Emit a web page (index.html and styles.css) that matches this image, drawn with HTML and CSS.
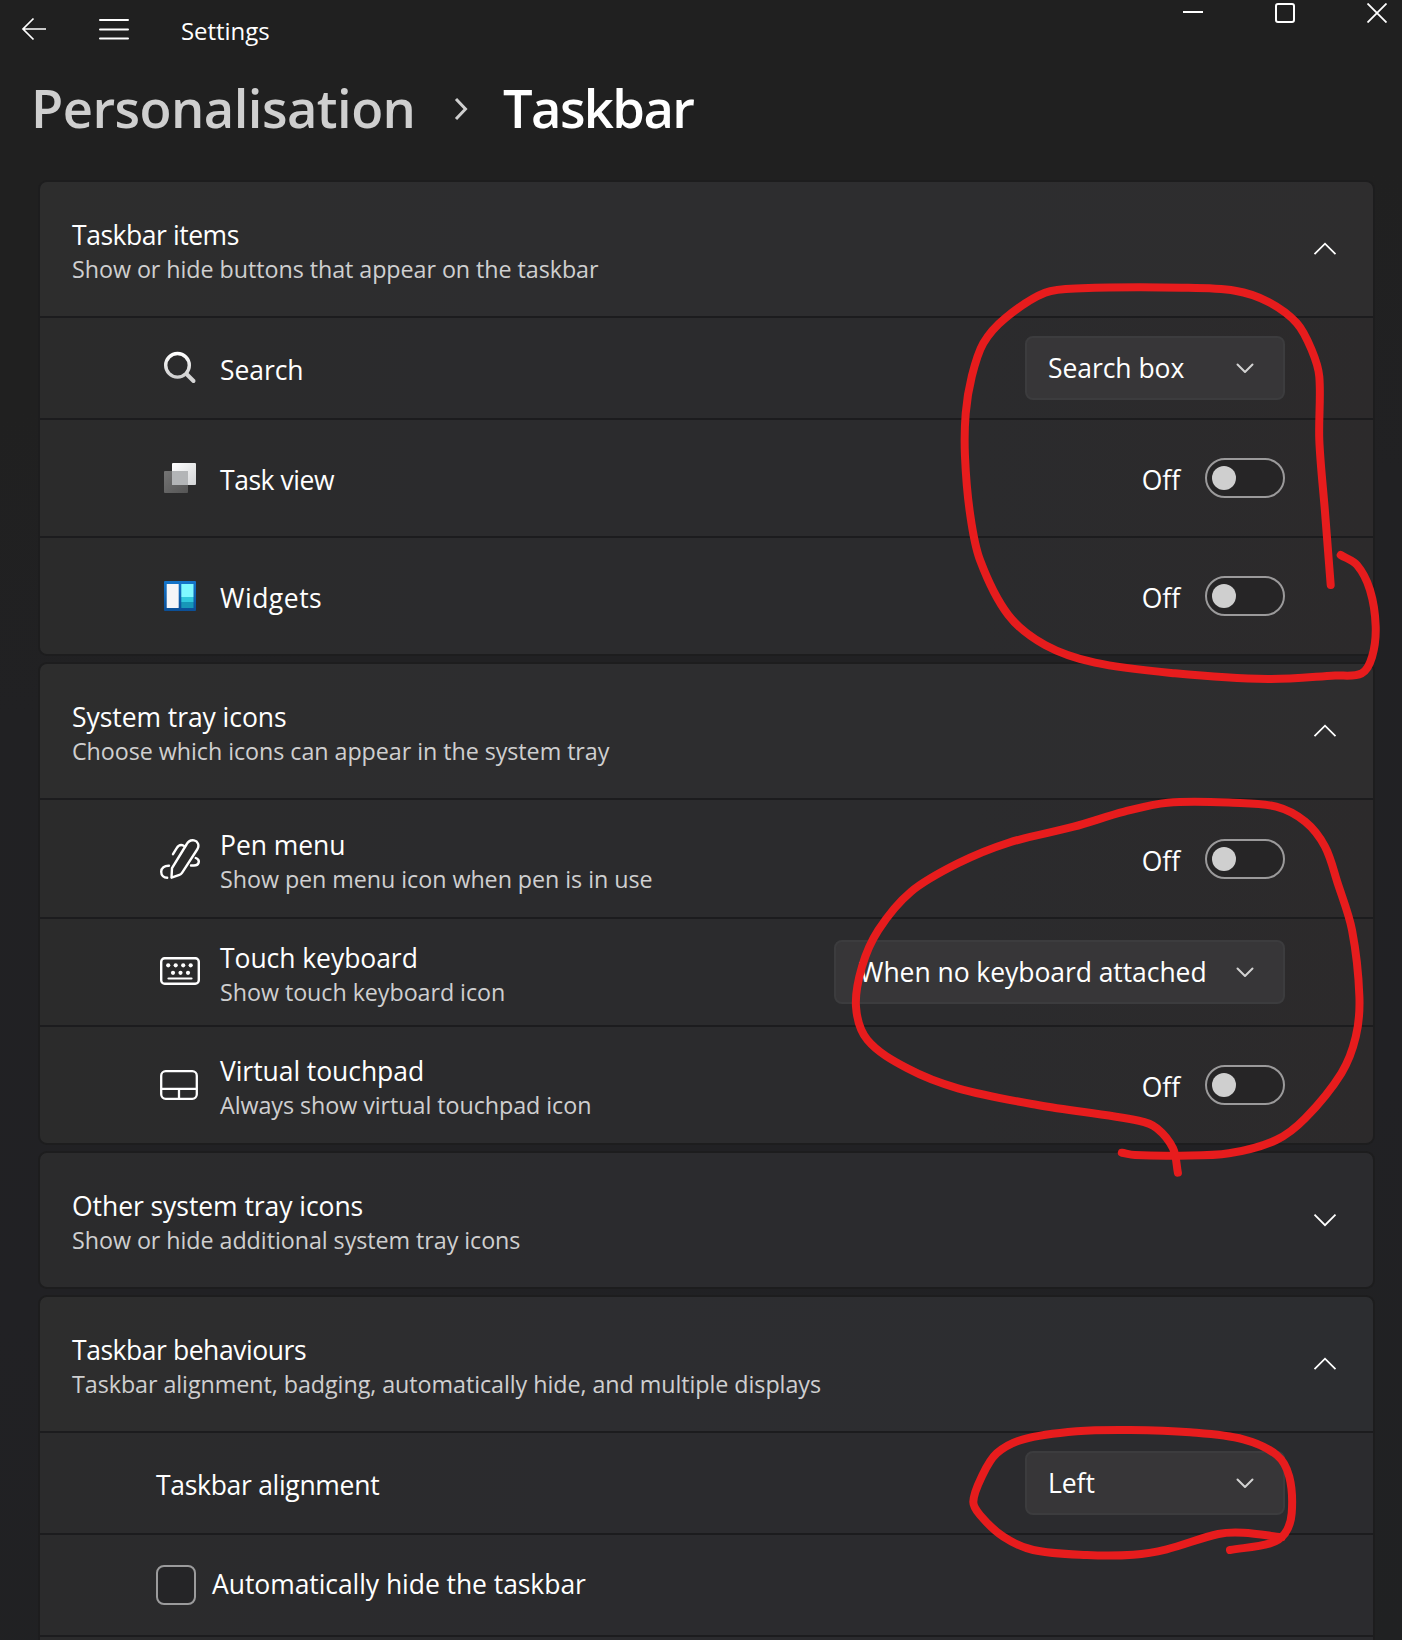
FILE: index.html
```html
<!DOCTYPE html>
<html lang="en-GB">
<head>
<meta charset="utf-8">
<title>Settings – Taskbar</title>
<link rel="stylesheet" href="styles.css">
</head>
<body>
<svg class="defs" width="0" height="0" aria-hidden="true">
  <symbol id="chev-up" viewBox="0 0 24 14"><path d="M1.5 12.2 12 1.7l10.5 10.5" fill="none" stroke="currentColor" stroke-width="1.8"/></symbol>
  <symbol id="chev-down" viewBox="0 0 24 14"><path d="M1.5 1.7 12 12.2 22.5 1.7" fill="none" stroke="currentColor" stroke-width="1.8"/></symbol>
  <symbol id="chev-small" viewBox="0 0 18 11"><path d="M1.5 1.5 9 9l7.5-7.5" fill="none" stroke="currentColor" stroke-width="2" stroke-linecap="round" stroke-linejoin="round"/></symbol>
</svg>

<header class="titlebar">
  <svg class="back" width="26" height="24" viewBox="0 0 26 24"><path d="M25 12H2M12.5 1.5 2 12l10.500 10.500" fill="none" stroke="#fff" stroke-width="1.7"/></svg>
  <svg class="menu" width="30" height="22" viewBox="0 0 30 22"><path d="M1 2h28M1 11.500h28M1 20.500h28" fill="none" stroke="#fff" stroke-width="2" stroke-linecap="round"/></svg>
  <span class="app-name">Settings</span>
  <div class="window-buttons">
    <svg width="20" height="20" viewBox="0 0 20 20"><path d="M0 9h20" stroke="#fff" stroke-width="2"/></svg>
    <svg width="20" height="20" viewBox="0 0 20 20"><rect x="1" y="1" width="18" height="18" rx="2" fill="none" stroke="#fff" stroke-width="2"/></svg>
    <svg width="20" height="20" viewBox="0 0 20 20"><path d="M.5.5l19 19M19.5.5l-19 19" stroke="#fff" stroke-width="1.8"/></svg>
  </div>
</header>

<nav class="breadcrumb">
  <span class="parent">Personalisation</span>
  <svg width="14" height="24" viewBox="0 0 14 24"><path d="M2 2l9.500 10L2 22" fill="none" stroke="#cfcfcf" stroke-width="3"/></svg>
  <h1 class="current">Taskbar</h1>
</nav>

<main class="cards">
  <section class="card">
    <div class="row head">
      <div class="label"><div class="title tight">Taskbar items</div><div class="sub">Show or hide buttons that appear on the taskbar</div></div>
      <svg class="expander"><use href="#chev-up"/></svg>
    </div>
    <div class="row h100">
      <svg class="icon" width="40" height="40" viewBox="0 0 40 40">
        <defs><linearGradient id="lens" x1="0" y1="0" x2="0" y2="1"><stop offset="0" stop-color="#fff"/><stop offset="1" stop-color="#d0d0d0"/></linearGradient></defs>
        <path d="M27 26.500l6.500 6.500" stroke="#d6d6d6" stroke-width="4" stroke-linecap="round"/>
        <circle cx="17.500" cy="17.300" r="11.800" fill="none" stroke="url(#lens)" stroke-width="3.400"/>
      </svg>
      <div class="label"><div class="title">Search</div></div>
      <button class="select"><span>Search box</span><svg class="caret"><use href="#chev-small"/></svg></button>
    </div>
    <div class="row h116">
      <svg class="icon" width="40" height="40" viewBox="0 0 40 40">
        <defs>
          <linearGradient id="pane" x1="0" y1="0" x2="1" y2="1"><stop offset="0" stop-color="#fff"/><stop offset="1" stop-color="#d2d4d6"/></linearGradient>
          <linearGradient id="shade" x1="0" y1="0" x2="1" y2="1"><stop offset="0" stop-color="#747474"/><stop offset="1" stop-color="#555"/></linearGradient>
        </defs>
        <rect x="4" y="13" width="24" height="22" rx="1" fill="url(#shade)"/>
        <rect x="12" y="5" width="24" height="22" rx="1" fill="url(#pane)"/>
        <path d="M12 13h16v14H12z" fill="#b3b5b7"/>
      </svg>
      <div class="label"><div class="title tight">Task view</div></div>
      <span class="state">Off</span><span class="toggle" role="switch" aria-checked="false"></span>
    </div>
    <div class="row h116">
      <svg class="icon" width="40" height="40" viewBox="0 0 40 40">
        <defs><linearGradient id="blue" x1="0" y1="0" x2="0" y2="1"><stop offset="0" stop-color="#1475cb"/><stop offset="1" stop-color="#0b4f96"/></linearGradient></defs>
        <rect x="4" y="5" width="32" height="30" rx="1" fill="url(#blue)"/>
        <rect x="6.700" y="8" width="12" height="24" rx=".6" fill="#f5f5f7"/>
        <rect x="21.300" y="8" width="12.200" height="13" fill="#7ff9ff"/>
        <rect x="21.300" y="21" width="12.200" height="5" fill="#30c8dc"/>
        <rect x="21.300" y="26" width="12.200" height="6" fill="#1797b8"/>
      </svg>
      <div class="label"><div class="title wide">Widgets</div></div>
      <span class="state">Off</span><span class="toggle" role="switch" aria-checked="false"></span>
    </div>
  </section>

  <section class="card">
    <div class="row head">
      <div class="label"><div class="title">System tray icons</div><div class="sub">Choose which icons can appear in the system tray</div></div>
      <svg class="expander"><use href="#chev-up"/></svg>
    </div>
    <div class="row h117">
      <svg class="icon" width="40" height="40" viewBox="0 0 40 40" fill="none" stroke="#fff" stroke-width="2.400" stroke-linecap="round" stroke-linejoin="round">
        <path d="M11.500 38.700 12 29.200 26.500 5.500C28.200 2.200 31 .9 34 1.400c4 .8 5.500 5 3.500 8.600L22 33.800q-1 1.500-2.600 2z"/>
        <path d="M23.800 6.800C21 5.400 18.300 6.600 16.700 9.200l-3.700 6"/>
        <path d="M9 26.700C4.500 26.500 1.200 29 1.200 32.800c0 3.600 2.600 6 6 6"/>
        <path d="M35.800 19c2.500 1 3.400 3 2.700 5-.7 2-2.500 2.500-4.500 2.500h-3"/>
      </svg>
      <div class="label low"><div class="title">Pen menu</div><div class="sub">Show pen menu icon when pen is in use</div></div>
      <span class="state low">Off</span><span class="toggle" role="switch" aria-checked="false"></span>
    </div>
    <div class="row h106">
      <svg class="icon" width="40" height="40" viewBox="0 0 40 40">
        <rect x="1.200" y="6.200" width="37.600" height="25.600" rx="3.500" fill="none" stroke="#fff" stroke-width="2.400"/>
        <path d="M8.500 26.500h23" stroke="#fff" stroke-width="2.200" stroke-linecap="round"/>
        <g fill="#fff"><circle cx="8.200" cy="13.300" r="2.100"/><circle cx="15.700" cy="13.300" r="2.100"/><circle cx="23.200" cy="13.300" r="2.100"/><circle cx="30.700" cy="13.300" r="2.100"/><circle cx="13" cy="20.800" r="2.100"/><circle cx="20.500" cy="20.800" r="2.100"/><circle cx="28" cy="20.800" r="2.100"/></g>
      </svg>
      <div class="label"><div class="title">Touch keyboard</div><div class="sub">Show touch keyboard icon</div></div>
      <button class="select long"><span>When no keyboard attached</span><svg class="caret"><use href="#chev-small"/></svg></button>
    </div>
    <div class="row h116">
      <svg class="icon" width="40" height="40" viewBox="0 0 40 40" fill="none" stroke="#fff" stroke-width="2.300">
        <rect x="1.200" y="6.200" width="35.600" height="27.600" rx="4.500"/>
        <path d="M1.200 23.800h35.600M19 23.800v10"/>
      </svg>
      <div class="label"><div class="title">Virtual touchpad</div><div class="sub">Always show virtual touchpad icon</div></div>
      <span class="state">Off</span><span class="toggle" role="switch" aria-checked="false"></span>
    </div>
  </section>

  <section class="card cool">
    <div class="row h134 wide-row">
      <div class="label"><div class="title">Other system tray icons</div><div class="sub">Show or hide additional system tray icons</div></div>
      <svg class="expander"><use href="#chev-down"/></svg>
    </div>
  </section>

  <section class="card cool">
    <div class="row head">
      <div class="label"><div class="title tight">Taskbar behaviours</div><div class="sub">Taskbar alignment, badging, automatically hide, and multiple displays</div></div>
      <svg class="expander"><use href="#chev-up"/></svg>
    </div>
    <div class="row h100 plain">
      <div class="label"><div class="title snug">Taskbar alignment</div></div>
      <button class="select"><span>Left</span><svg class="caret"><use href="#chev-small"/></svg></button>
    </div>
    <div class="row h100 plain">
      <span class="checkbox" role="checkbox" aria-checked="false"></span>
      <div class="label check-label"><div class="title">Automatically hide the taskbar</div></div>
    </div>
    <div class="row cut"></div>
  </section>
</main>

<svg class="ink" width="1402" height="1640" viewBox="0 0 1402 1640"></svg>
<script src="ink.js"></script>
</body>
</html>
```
FILE: styles.css
```css
* {
  box-sizing: border-box;
}

html,
body {
  height: 1640px;
}

body {
  position: relative;
  margin: 0;
  color: #fff;
  font: 26.5px/36px "Open Sans", "Noto Sans", sans-serif;
  letter-spacing: -0.06px;
  background: linear-gradient(170deg, #202020 0, #202020 22%, #212123 38%, #212124 70%, #202122 100%);
}

.defs {
  position: absolute;
}

.titlebar {
  display: flex;
  align-items: flex-start;
  height: 64px;
  padding-left: 21px;
}

.back {
  margin-top: 17px;
}

.menu {
  margin: 18px 0 0 52px;
}

.app-name {
  margin: 15px 0 0 52px;
  font-size: 24px;
  line-height: 32px;
}

.window-buttons {
  display: flex;
  gap: 72px;
  margin: 3px 15px 0 auto;
}

.breadcrumb {
  display: flex;
  align-items: center;
  height: 90px;
  padding-left: 31px;
  font-size: 52.5px;
  font-weight: 600;
  line-height: 72px;
}

.parent {
  width: 392px;
  padding-bottom: 2px;
  color: #cfcfcf;
  letter-spacing: -0.55px;
}

.breadcrumb svg {
  margin: 0 35px 0 31px;
}

.current {
  margin: 0;
  padding-bottom: 2px;
  font: inherit;
  letter-spacing: -1.6px;
}

.cards {
  display: flex;
  flex-direction: column;
  gap: 10px;
  margin: 28px 29px 0 40px;
}

.card {
  display: flex;
  flex-direction: column;
  flex-shrink: 0;
  gap: 2px;
  border-radius: 7px;
  overflow: hidden;
  background: #1c1c1e;
  box-shadow: 0 0 0 2px #1d1d1e;
}

.card:last-child {
  border-radius: 7px 7px 0 0;
}

.row {
  display: flex;
  align-items: center;
  flex-shrink: 0;
  padding: 0 88px 0 120px;
  background: linear-gradient(90deg, #2b2b2b, #2b2b2d 30%, #2b2b2d 70%, #2c2a2b);
}

.cool .row {
  background: linear-gradient(90deg, #2b2b2c, #2b2b2e 40%, #2b2b2e);
}

.head {
  height: 134px;
  padding: 0 36px 0 32px;
  background: linear-gradient(90deg, #2d2d2d, #2d2d2f 35%, #2d2d2f 70%, #2e2d2e);
}

.cool .head {
  background: linear-gradient(90deg, #2d2d2d, #2d2d30 40%, #2c2d30);
}

.h100 { height: 100px; }
.h106 { height: 106px; }
.h116 { height: 116px; }
.h117 { height: 117px; }
.h134 { height: 134px; }
.cut { height: 3px; }

.wide-row {
  padding: 0 36px 0 32px;
}

.plain {
  padding-left: 116px;
}

.icon {
  flex: none;
  margin-right: 20px;
}

.label {
  flex: 1;
  padding-top: 3px;
  white-space: nowrap;
}

.check-label {
  padding: 0 0 3px 16px;
}

.title {
  height: 36px;
}

.tight {
  letter-spacing: -0.45px;
}

.snug {
  letter-spacing: -0.3px;
}

.wide {
  letter-spacing: 0.5px;
}

.sub {
  height: 32px;
  color: #cfcfd0;
  font-size: 23.3px;
  line-height: 32px;
}

.expander {
  width: 24px;
  height: 14px;
}

.state {
  margin-right: 25px;
  padding-top: 3px;
}

.low {
  padding-top: 5px;
}

.toggle {
  width: 80px;
  height: 40px;
  padding: 6px 5px;
  border: 2px solid #9b9a9b;
  border-radius: 20px;
  background: #262526;
}

.toggle::before {
  content: "";
  display: block;
  width: 24px;
  height: 24px;
  border-radius: 50%;
  background: #cfcfcf;
}

.select {
  display: flex;
  align-items: center;
  justify-content: space-between;
  width: 260px;
  height: 64px;
  padding: 0 29px 0 21px;
  border: 2px solid #3c3c3e;
  border-radius: 8px;
  color: #fff;
  font: inherit;
  letter-spacing: inherit;
  background: #373638;
}

.long {
  width: 451px;
  padding-left: 23px;
}

.caret {
  width: 18px;
  height: 11px;
  color: #d2d2d2;
}

.checkbox {
  width: 40px;
  height: 40px;
  border: 2px solid #9b9b9c;
  border-radius: 8px;
  background: #252527;
}

.ink {
  position: absolute;
  top: 0;
  left: 0;
  fill: none;
  stroke: #e71c1d;
  stroke-width: 8px;
  stroke-linecap: round;
  stroke-linejoin: round;
  pointer-events: none;
}
```
FILE: ink.js
```js
// Freehand pen strokes: each list of points becomes one smooth curve.
const strokes = [
  [[1330.7,585],[1325,512],[1319.3,440],[1319.3,376.7],[1311.7,350],[1296.7,323],[1268,301.7],[1235,290.7],[1181.7,287.7],[1081.7,288.3],[1045,292.7],[1005,318.3],[983.3,343.3],[971.7,376.7],[965.7,413.3],[965,456.7],[970,513.3],[980,560],[1008.3,615],[1045,645],[1095,662.7],[1175,673.3],[1268,679],[1335,675.5],[1361.7,673.3],[1372,657],[1375.7,626.7],[1370,590],[1357,565],[1340.7,555]],
  [[1177.9,1172.7],[1173,1148.3],[1157,1128.3],[1138.8,1120.7],[1037.5,1105],[958,1088.3],[907.3,1068.3],[867.5,1040],[856,1006.7],[862,966.7],[878.4,930],[911,891.7],[958,863.3],[1008.6,842.7],[1073.7,826.7],[1124.3,811.7],[1167.7,802.7],[1232.8,802.7],[1276.2,806.7],[1305.2,821.7],[1325,846.7],[1337.7,883.3],[1352,930],[1359.4,996.7],[1355.8,1036.7],[1341.3,1073.3],[1305.2,1118.3],[1276.2,1140],[1229,1153.3],[1178.6,1155.7],[1135,1155],[1121.8,1152.7]],
  [[1281.7,1537.3],[1243.3,1532.7],[1218.3,1534],[1166.7,1549.3],[1133.3,1554.7],[1086.7,1555],[1033.3,1550],[1003.3,1536.7],[980,1515],[973.3,1501.7],[981.7,1476.7],[996.7,1453.3],[1023.3,1439.3],[1076.7,1431.3],[1130,1430],[1190,1432.3],[1243.3,1439.3],[1276.7,1455],[1289.3,1476.7],[1291.7,1513.3],[1285,1533.3],[1270,1543.3],[1230,1550]]
];

const ink = document.querySelector(".ink");
for (const pts of strokes) {
  let d = `M${pts[0]}`;
  for (let i = 0; i < pts.length - 1; i++) {
    const p0 = pts[Math.max(i - 1, 0)];
    const p1 = pts[i];
    const p2 = pts[i + 1];
    const p3 = pts[Math.min(i + 2, pts.length - 1)];
    // Handle length follows the segment, so uneven spacing does not overshoot.
    const seg = Math.hypot(p2[0] - p1[0], p2[1] - p1[1]) / 3;
    const l1 = Math.hypot(p2[0] - p0[0], p2[1] - p0[1]);
    const l2 = Math.hypot(p3[0] - p1[0], p3[1] - p1[1]);
    const c1 = [p1[0] + (p2[0] - p0[0]) / l1 * seg, p1[1] + (p2[1] - p0[1]) / l1 * seg];
    const c2 = [p2[0] - (p3[0] - p1[0]) / l2 * seg, p2[1] - (p3[1] - p1[1]) / l2 * seg];
    d += `C${c1} ${c2} ${p2}`;
  }
  const path = document.createElementNS("http://www.w3.org/2000/svg", "path");
  path.setAttribute("d", d);
  ink.append(path);
}
```
